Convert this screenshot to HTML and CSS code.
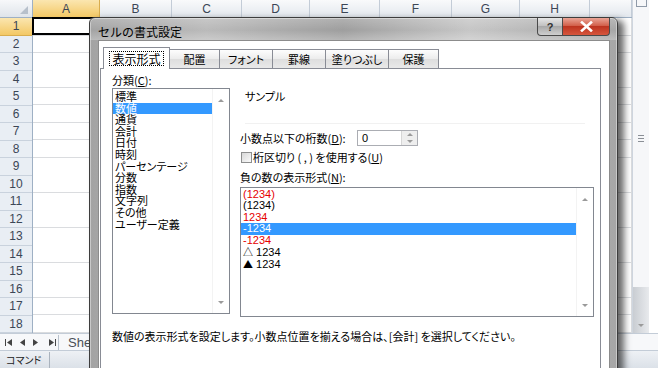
FILE: index.html
```html
<!DOCTYPE html>
<html lang="ja">
<head>
    <meta charset="UTF-8">
    <meta name="viewport" content="width=device-width, initial-scale=1.0">
    <title>セルの書式設定</title>
    <link rel="stylesheet" href="styles.css">
</head>
<body>

    <!-- Excel のシート (背景) -->
    <div class="excel">
        <div class="work">
            <div class="sheet">
                <div class="corner"></div>
                <div class="col-heads">
                    <div class="ch sel">A</div>
                    <div class="ch">B</div>
                    <div class="ch">C</div>
                    <div class="ch">D</div>
                    <div class="ch">E</div>
                    <div class="ch">F</div>
                    <div class="ch">G</div>
                    <div class="ch">H</div>
                    <div class="ch"></div>
                </div>
                <div class="row-heads">
                    <div class="rh sel">1</div>
                    <div class="rh">2</div>
                    <div class="rh">3</div>
                    <div class="rh">4</div>
                    <div class="rh">5</div>
                    <div class="rh">6</div>
                    <div class="rh">7</div>
                    <div class="rh">8</div>
                    <div class="rh">9</div>
                    <div class="rh">10</div>
                    <div class="rh">11</div>
                    <div class="rh">12</div>
                    <div class="rh">13</div>
                    <div class="rh">14</div>
                    <div class="rh">15</div>
                    <div class="rh">16</div>
                    <div class="rh">17</div>
                    <div class="rh">18</div>
                </div>
                <div class="cells">
                    <div class="cell-col"><div class="active-cell"></div></div>
                    <div class="cell-col"></div>
                    <div class="cell-col"></div>
                    <div class="cell-col"></div>
                    <div class="cell-col"></div>
                    <div class="cell-col"></div>
                    <div class="cell-col"></div>
                    <div class="cell-col"></div>
                    <div class="cell-col"></div>
                </div>
            </div>
            <div class="vscroll">
                <div class="split-box"></div>
                <div class="grip"><span></span><span></span><span></span></div>
                <div class="scroll-end"><span class="arrow-down"></span></div>
            </div>
        </div>
        <div class="tabbar">
            <svg class="nav" width="54" height="9" viewBox="0 0 54 9">
                <rect x="1" y="1" width="1" height="7" fill="#444"/>
                <path d="M8 1 L3 4.5 L8 8 Z" fill="#444"/>
                <path d="M21 1 L16 4.5 L21 8 Z" fill="#444"/>
                <path d="M29 1 L34 4.5 L29 8 Z" fill="#444"/>
                <path d="M45 1 L50 4.5 L45 8 Z" fill="#444"/>
                <rect x="51" y="1" width="1" height="7" fill="#444"/>
            </svg>
            <div class="tab-sep"></div>
            <div class="sheet-tab">Sheet1</div>
        </div>
        <div class="status">
            <div class="mode">コマンド</div>
            <div class="status-sep"></div>
        </div>
    </div>

    <!-- セルの書式設定 ダイアログ -->
    <div class="dialog">
        <div class="titlebar">
            <div class="title">セルの書式設定</div>
            <div class="caption-btn help">?</div>
            <div class="caption-btn close">
                <svg width="13" height="11" viewBox="0 0 13 11">
                    <path d="M2 1.5 L11 9.5 M11 1.5 L2 9.5" stroke="#ffffff" stroke-width="2.6" stroke-linecap="square"/>
                </svg>
            </div>
        </div>

        <div class="client">
            <div class="tabs">
                <div class="tab active"><span class="focus">表示形式</span></div>
                <div class="tab w-50">配置</div>
                <div class="tab w-53">フォント</div>
                <div class="tab w-53">罫線</div>
                <div class="tab w-63">塗りつぶし</div>
                <div class="tab w-50">保護</div>
            </div>

            <div class="panel">
                <div class="panel-grid">
                    <div class="left">
                        <div class="label">分類(<u>C</u>):</div>
                        <div class="listbox category">
                            <div class="items">
                                <div class="item">標準</div>
                                <div class="item selected">数値</div>
                                <div class="item">通貨</div>
                                <div class="item">会計</div>
                                <div class="item">日付</div>
                                <div class="item">時刻</div>
                                <div class="item">パーセンテージ</div>
                                <div class="item">分数</div>
                                <div class="item">指数</div>
                                <div class="item">文字列</div>
                                <div class="item">その他</div>
                                <div class="item">ユーザー定義</div>
                            </div>
                            <div class="lb-scroll"><span class="arrow-up"></span><span class="arrow-down"></span></div>
                        </div>
                    </div>

                    <div class="right">
                        <div class="sample">サンプル</div>
                        <div class="field-row">
                            <div class="field-label">小数点以下の桁数(<u>D</u>):</div>
                            <div class="spin">
                                <div class="spin-value">0</div>
                                <div class="spin-btns">
                                    <span class="spin-btn"><span class="arrow-up"></span></span>
                                    <span class="spin-btn"><span class="arrow-down"></span></span>
                                </div>
                            </div>
                        </div>
                        <div class="check-row"><span class="checkbox"></span>桁区切り ( , ) を使用する(<u>U</u>)</div>
                        <div class="label neg-label">負の数の表示形式(<u>N</u>):</div>
                        <div class="listbox negative">
                            <div class="items">
                                <div class="item red">(1234)</div>
                                <div class="item">(1234)</div>
                                <div class="item red">1234</div>
                                <div class="item selected">-1234</div>
                                <div class="item red">-1234</div>
                                <div class="item"><span class="mark">△</span> 1234</div>
                                <div class="item"><span class="mark">▲</span> 1234</div>
                            </div>
                            <div class="lb-scroll"><span class="arrow-up"></span><span class="arrow-down"></span></div>
                        </div>
                    </div>
                </div>

                <div class="description">数値の表示形式を設定します。小数点位置を揃える場合は、[会計] を選択してください。</div>
            </div>
        </div>
    </div>

</body>
</html>
```

FILE: styles.css
```css
body {
    margin: 0;
    width: 658px;
    height: 368px;
    overflow: hidden;
    position: relative;
    background-color: #ffffff;
    font-family: "Noto Sans CJK JP", "Liberation Sans", sans-serif;
    font-size: 11px;
    color: #000000;
}

/* --- Excel シート --- */
.excel {
    display: flex;
    flex-direction: column;
    height: 368px;
}
.work {
    display: flex;
    height: 333px;
}
.sheet {
    width: 632px;
    display: grid;
    grid-template-columns: 33px 1fr;
    grid-template-rows: 18px 315px;
}
.corner {
    display: flex;
    justify-content: flex-end;
    align-items: flex-end;
    padding: 0 4px 3px 0;
    box-sizing: border-box;
    background: linear-gradient(#f7f8fa, #dfe4ea);
    border-right: 1px solid #9eb0c4;
    border-bottom: 1px solid #9eb0c4;
}
.corner::after {
    content: "";
    border-left: 8px solid transparent;
    border-bottom: 8px solid #b7c0cb;
}
.col-heads,
.cells {
    display: grid;
    grid-template-columns: 67px 72px 70px 68px 70px 72px 68px 70px 1fr;
}
.col-heads {
    background: linear-gradient(#f9fafb, #e3e8ee);
    border-bottom: 1px solid #9eb0c4;
}
.ch {
    display: flex;
    align-items: center;
    justify-content: center;
    border-right: 1px solid #c3ccd7;
    font-family: "Liberation Sans", sans-serif;
    font-size: 12px;
    color: #3b4656;
}
.ch.sel {
    background: linear-gradient(#fbe6b0, #f3c865);
    border-right-color: #d9ad4e;
}
.row-heads {
    display: grid;
    grid-template-rows: repeat(18, 1fr);
    background-color: #e9eef4;
    border-right: 1px solid #9eb0c4;
}
.rh {
    display: flex;
    align-items: center;
    justify-content: center;
    border-bottom: 1px solid #c9d2dd;
    font-family: "Liberation Sans", sans-serif;
    font-size: 12px;
    color: #3b4656;
}
.rh.sel {
    background: linear-gradient(#fbe6b0, #f3c865);
    border-bottom-color: #d9ad4e;
}
.cells {
    background: repeating-linear-gradient(to bottom, #ffffff 0, #ffffff 16.5px, #dadcdf 16.5px, #dadcdf 17.5px);
}
.cell-col {
    border-right: 1px solid #dadcdf;
}
.active-cell {
    height: 18px;
    margin: -1px -1px 0 -1px;
    border: 2px solid #000000;
    box-sizing: border-box;
}
.vscroll {
    width: 16px;
    display: flex;
    flex-direction: column;
    align-items: center;
    border-left: 1px solid #cfd6df;
    background-color: #f6f7f9;
}
.split-box {
    width: 9px;
    height: 6px;
    border: 1px solid #8f9aa8;
    border-top: none;
}
.grip {
    margin-top: 128px;
    display: flex;
    flex-direction: column;
    gap: 2px;
}
.grip span {
    display: block;
    width: 6px;
    height: 1px;
    background-color: #8a8f96;
}
.scroll-end {
    margin-top: auto;
    width: 100%;
    height: 46px;
    display: flex;
    justify-content: center;
    align-items: flex-end;
    padding-bottom: 6px;
    box-sizing: border-box;
    background: linear-gradient(90deg, #c9cdd2, #e8eaed);
}
.tabbar {
    display: flex;
    align-items: center;
    height: 17px;
    background-color: #f7f8fa;
    border-top: 1px solid #c3ccd7;
    box-sizing: border-box;
}
.nav {
    margin-left: 4px;
}
.tab-sep {
    width: 1px;
    height: 15px;
    background-color: #b9c2cd;
}
.sheet-tab {
    margin-left: 9px;
    font-family: "Liberation Sans", sans-serif;
    font-size: 13px;
    color: #4a4f56;
}
.status {
    display: flex;
    align-items: center;
    height: 18px;
    background: linear-gradient(#eef1f5, #dbe1e8);
    border-top: 1px solid #c3ccd7;
    box-sizing: border-box;
}
.mode {
    width: 49px;
    padding-left: 6px;
    box-sizing: border-box;
    font-size: 10px;
    font-feature-settings: "palt";
    color: #222222;
}
.status-sep {
    width: 1px;
    height: 16px;
    background-color: #aab3be;
}

/* --- ダイアログ --- */
.dialog {
    position: absolute;
    left: 89px;
    top: 17px;
    width: 529px;
    height: 362px;
    box-sizing: border-box;
    display: flex;
    flex-direction: column;
    border: 1px solid #3d3d3d;
    border-radius: 6px 6px 0 0;
    background: linear-gradient(90deg, #a3a3a3, #bababa 22%, #9e9e9e 48%, #c6c6c6 72%, #a6a6a6);
    box-shadow: 6px 3px 7px rgba(0, 0, 0, 0.6), inset 0 0 0 1px rgba(255, 255, 255, 0.4);
}
.titlebar {
    display: flex;
    align-items: flex-start;
    height: 25px;
    padding: 0 7px 0 8px;
    background: linear-gradient(rgba(255, 255, 255, 0.2), rgba(255, 255, 255, 0) 55%, rgba(255, 255, 255, 0.25));
}
.title {
    flex: 1;
    padding-top: 6px;
    font-size: 12px;
    line-height: 16px;
    color: #000000;
}
.caption-btn {
    height: 18px;
    box-sizing: border-box;
    display: flex;
    align-items: center;
    justify-content: center;
    border: 1px solid #4a4a4a;
    border-top: none;
}
.help {
    width: 26px;
    border-radius: 0 0 0 4px;
    background: linear-gradient(#e6e6e6, #c2c2c2 45%, #a9a9a9 50%, #cfcfcf);
    font-family: "Liberation Sans", sans-serif;
    font-size: 11px;
    font-weight: bold;
    color: #333333;
}
.close {
    width: 47px;
    border-left: none;
    border-radius: 0 0 4px 0;
    background: linear-gradient(#eaa597, #d2604b 45%, #bd3420 50%, #d6563d);
}
.client {
    flex: 1;
    margin: 0 7px 0 8px;
    background-color: #ffffff;
    border: 1px solid #8c8c8c;
    border-bottom: none;
}
.tabs {
    display: flex;
    align-items: flex-end;
    height: 22px;
    margin: 6px 0 -1px 4px;
    position: relative;
    z-index: 1;
}
.tab {
    height: 19px;
    margin-bottom: 1px;
    box-sizing: border-box;
    display: flex;
    align-items: center;
    justify-content: center;
    border: 1px solid #898c95;
    border-bottom: none;
    background: linear-gradient(#fdfdfd, #ececec 50%, #dedede 52%, #e9e9e9);
    font-size: 11px;
    font-feature-settings: "palt";
}
.tab + .tab {
    margin-left: -1px;
}
.tab.active {
    width: 67px;
    height: 22px;
    margin-bottom: 0;
    background: #ffffff;
}
.tab .focus {
    padding: 0 2px;
    line-height: 13px;
    outline: 1px dotted #000000;
    font-size: 12px;
}
.w-50 { width: 51px; }
.w-53 { width: 54px; }
.w-63 { width: 64px; }
.panel {
    margin-left: 1px;
    width: 501px;
    height: 310px;
    box-sizing: border-box;
    border: 1px solid #898c95;
    border-bottom: none;
    padding-left: 11px;
}
.panel-grid {
    display: grid;
    grid-template-columns: 118px 354px;
    column-gap: 10px;
}
.label {
    margin-top: 5px;
    line-height: 12px;
    font-feature-settings: "palt";
}
.listbox {
    display: flex;
    box-sizing: border-box;
    border: 1px solid #828790;
}
.category {
    margin-top: 2px;
    height: 226px;
}
.items {
    flex: 1;
    padding-top: 2px;
}
.item {
    height: 11.6px;
    line-height: 11.6px;
    padding-left: 2px;
    white-space: nowrap;
    font-feature-settings: "palt";
}
.item.selected {
    background-color: #3399ff;
    color: #ffffff;
}
.lb-scroll {
    width: 17px;
    display: flex;
    flex-direction: column;
    justify-content: space-between;
    align-items: center;
    padding: 10px 0 9px;
    box-sizing: border-box;
    border-left: 1px solid #f3f3f3;
}
.arrow-up {
    width: 0;
    height: 0;
    border-left: 3px solid transparent;
    border-right: 3px solid transparent;
    border-bottom: 3px solid #9a9a9a;
}
.arrow-down {
    width: 0;
    height: 0;
    border-left: 3px solid transparent;
    border-right: 3px solid transparent;
    border-top: 3px solid #9a9a9a;
}
.sample {
    margin: 19px 9px 0 5px;
    height: 36px;
    padding-top: 2px;
    box-sizing: border-box;
    line-height: 12px;
    border-bottom: 1px solid #f1f1f1;
    font-feature-settings: "palt";
}
.field-row {
    display: flex;
    align-items: center;
    height: 16px;
    margin-top: 6px;
    font-feature-settings: "palt";
}
.field-label {
    width: 117px;
}
.spin {
    display: flex;
    width: 61px;
    height: 16px;
    box-sizing: border-box;
    border: 1px solid #abadb3;
}
.spin-value {
    flex: 1;
    padding-left: 4px;
    line-height: 14px;
    font-family: "Liberation Sans", sans-serif;
}
.spin-btns {
    width: 15px;
    display: flex;
    flex-direction: column;
    background-color: #eeeeee;
    border-left: 1px solid #d6d6d6;
}
.spin-btn {
    flex: 1;
    display: flex;
    align-items: center;
    justify-content: center;
}
.check-row {
    display: flex;
    align-items: center;
    height: 12px;
    margin-top: 5px;
    font-feature-settings: "palt";
}
.checkbox {
    width: 11px;
    height: 11px;
    margin: 0 1px 0 1px;
    box-sizing: border-box;
    border: 1px solid #8e8f8f;
    background: linear-gradient(135deg, #d8d8d8, #fbfbfb);
}
.neg-label {
    margin-top: 8px;
}
.negative {
    margin-top: 4px;
    height: 130px;
}
.negative .items {
    padding-top: 0.5px;
}
.negative .item {
    height: 11.5px;
    line-height: 11.5px;
    font-family: "Liberation Sans", "Noto Sans CJK JP", sans-serif;
    font-size: 11px;
}
.negative .item.red {
    color: #e60000;
}
.negative .mark {
    font-family: "Noto Sans CJK JP", sans-serif;
    font-size: 10px;
}
.description {
    margin-top: 13px;
    line-height: 12px;
    font-feature-settings: "palt";
}
```
